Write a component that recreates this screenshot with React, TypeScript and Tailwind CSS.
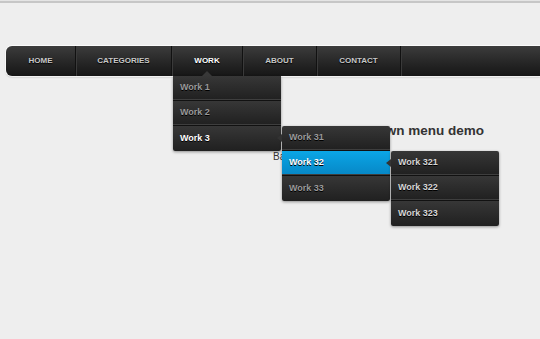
import React from "react";

type It = { label: string; active?: boolean; blue?: boolean; dim?: boolean; sub?: It[] };

const work: It[] = [
  { label: "Work 1" },
  { label: "Work 2" },
  {
    label: "Work 3",
    active: true,
    sub: [
      { label: "Work 31" },
      {
        label: "Work 32",
        blue: true,
        sub: [
          { label: "Work 321", dim: true },
          { label: "Work 322", dim: true },
          { label: "Work 323", dim: true },
        ],
      },
      { label: "Work 33" },
    ],
  },
];

const navItems = [
  { label: "HOME", w: "w-[70px]" },
  { label: "CATEGORIES", w: "w-[96px]" },
  { label: "WORK", w: "w-[71px]", active: true },
  { label: "ABOUT", w: "w-[74px]" },
  { label: "CONTACT", w: "w-[84px]" },
];

function Menu({ items, sub }: { items: It[]; sub?: boolean }) {
  return (
    <div
      className={
        "absolute w-[108px] flex flex-col rounded-[2px] shadow-[0_1px_3px_rgba(0,0,0,0.4)] z-10 " +
        (sub ? "left-[calc(100%+1px)] top-0" : "left-[1px] top-full")
      }
    >
      {sub ? (
        <div className="absolute -left-[5px] top-[8px] w-0 h-0 border-t-[4px] border-b-[4px] border-r-[5px] border-t-transparent border-b-transparent border-r-[#333]" />
      ) : (
        <div className="absolute left-[29px] -top-[5px] w-0 h-0 border-l-[5px] border-r-[5px] border-b-[5px] border-l-transparent border-r-transparent border-b-[#383838]" />
      )}
      {items.map((it, i) => {
        const last = i === items.length - 1;
        const base = it.blue
          ? "bg-gradient-to-b from-[#0ba6e6] to-[#0787c6] text-white"
          : "bg-gradient-to-b from-[#373737] to-[#202020] " +
            (it.active ? "text-white" : it.dim ? "text-[#d6d6d6]" : "text-[#9a9a9a]");
        return (
          <div
            key={it.label}
            className={
              "relative h-[25px] flex items-center pl-[7px] text-[9px] font-bold [text-shadow:0_1px_0_#000] " +
              base +
              (last ? " rounded-b-[2px]" : " border-b border-b-[#111] shadow-[inset_0_-1px_0_#3e3e3e]") +
              (i === 0 && sub ? " rounded-t-[2px]" : "")
            }
          >
            {it.label}
            {it.sub && <Menu items={it.sub} sub />}
          </div>
        );
      })}
    </div>
  );
}

export default function App() {
  return (
    <div className="relative w-[540px] h-[339px] overflow-hidden bg-[#eeeeee] font-['Liberation_Sans',Arial,sans-serif]">
      <div className="h-[1px] bg-[#e4e4e4]" />
      <div className="h-[2px] bg-[#c6c6c6]" />
      <div className="pt-[43px] pl-[6px] relative z-10">
        <div className="flex h-[30px] rounded-l-[6px] bg-gradient-to-b from-[#3c3c3c] to-[#161616] shadow-[0_0_0_1px_rgba(255,255,255,0.8),0_1px_2px_rgba(0,0,0,0.3)]">
          {navItems.map((n) => (
            <div
              key={n.label}
              className={
                n.w +
                " relative flex items-center justify-center border-r border-r-[#111] shadow-[1px_0_0_#3a3a3a] text-[8px] font-bold [text-shadow:0_1px_1px_#000] " +
                (n.active ? "text-white" : "text-[#c8c8c8]")
              }
            >
              {n.label}
              {n.active && <Menu items={work} />}
            </div>
          ))}
        </div>
      </div>
      <div className="flex justify-end pr-[56px] pt-[47px]">
        <h1 className="text-[13.5px] font-bold text-[#333] leading-[15px]">CSS3 drop down menu demo</h1>
      </div>
      <p className="pl-[273px] pt-[13px] text-[10px] text-[#333] leading-[12px]">Back to tutorial</p>
    </div>
  );
}
